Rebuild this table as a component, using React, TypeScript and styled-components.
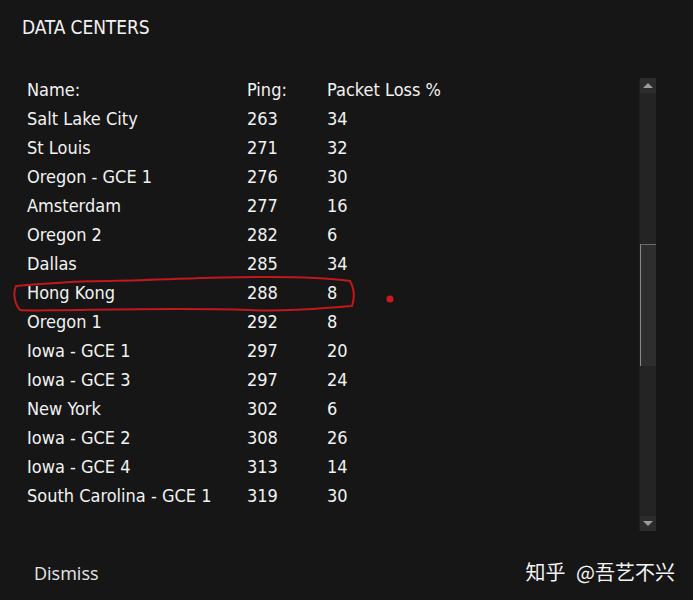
import React from 'react';
import styled, { createGlobalStyle } from 'styled-components';

interface DataCenter {
  name: string;
  ping: number;
  loss: number;
}

const dataCenters: DataCenter[] = [
  { name: 'Salt Lake City', ping: 263, loss: 34 },
  { name: 'St Louis', ping: 271, loss: 32 },
  { name: 'Oregon - GCE 1', ping: 276, loss: 30 },
  { name: 'Amsterdam', ping: 277, loss: 16 },
  { name: 'Oregon 2', ping: 282, loss: 6 },
  { name: 'Dallas', ping: 285, loss: 34 },
  { name: 'Hong Kong', ping: 288, loss: 8 },
  { name: 'Oregon 1', ping: 292, loss: 8 },
  { name: 'Iowa - GCE 1', ping: 297, loss: 20 },
  { name: 'Iowa - GCE 3', ping: 297, loss: 24 },
  { name: 'New York', ping: 302, loss: 6 },
  { name: 'Iowa - GCE 2', ping: 308, loss: 26 },
  { name: 'Iowa - GCE 4', ping: 313, loss: 14 },
  { name: 'South Carolina - GCE 1', ping: 319, loss: 30 },
];

const GlobalStyle = createGlobalStyle`
  html, body {
    margin: 0;
    padding: 0;
    background: #161616;
  }
`;

const Screen = styled.div`
  position: relative;
  width: 693px;
  height: 600px;
  background: #161616;
  color: #f2f2f2;
  font-family: 'DejaVu Sans Condensed', 'DejaVu Sans', sans-serif;
  display: flex;
  flex-direction: column;
  box-sizing: border-box;
  padding-top: 16px;
  overflow: hidden;
`;

const Title = styled.h1`
  margin: 0 0 0 22px;
  font-size: 19px;
  font-weight: normal;
  line-height: 22px;
  letter-spacing: -0.1px;
`;

const Panel = styled.div`
  display: flex;
  margin-top: 40px;
  height: 453px;
`;

const Table = styled.div`
  flex: 1;
  padding-left: 27px;
  margin-top: -3px;
`;

const Row = styled.div`
  display: grid;
  grid-template-columns: 220px 80px 1fr;
  height: 29px;
  align-items: center;
  font-size: 18px;
`;

const Cell = styled.span`
  white-space: nowrap;
`;

const Scrollbar = styled.div`
  width: 16px;
  margin-right: 37px;
  background: #1f1f1f;
  border-left: 1px solid #1c1c1c;
  display: flex;
  flex-direction: column;
`;

const ArrowButton = styled.div`
  height: 15px;
  background: #2c2c2c;
  display: flex;
  align-items: center;
  justify-content: center;
`;

const Arrow = styled.div<{ $up?: boolean }>`
  width: 0;
  height: 0;
  border-left: 5px solid transparent;
  border-right: 5px solid transparent;
  ${(p) =>
    p.$up ? 'border-bottom: 5px solid #9a9a9a;' : 'border-top: 5px solid #9a9a9a;'}
`;

const Track = styled.div`
  flex: 1;
  background: #242424;
  display: flex;
  flex-direction: column;
`;

const Thumb = styled.div`
  margin-top: 151px;
  height: 121px;
  background: #2e2e2e;
  border-left: 1px solid #8a8a8a;
  border-top: 1px solid #6a6a6a;
`;

const Footer = styled.div`
  display: flex;
  justify-content: space-between;
  align-items: center;
  margin-top: 30px;
  padding: 0 18px 0 34px;
`;

const Dismiss = styled.span`
  font-family: 'Open Sans', 'DejaVu Sans', sans-serif;
  font-size: 18px;
  color: #e6e6e6;
  margin-top: -2px;
`;

const Watermark = styled.span`
  font-family: 'Noto Sans CJK SC', 'Noto Sans', sans-serif;
  font-size: 20px;
  color: #f4f4f4;
  margin-top: -4px;
  word-spacing: 6px;
`;

const Annotation = styled.svg`
  position: absolute;
  left: 0;
  top: 0;
  pointer-events: none;
`;

const App: React.FC = () => {
  return (
    <>
      <GlobalStyle />
      <Screen>
        <Title>DATA CENTERS</Title>
        <Panel>
          <Table>
            <Row>
              <Cell>Name:</Cell>
              <Cell>Ping:</Cell>
              <Cell>Packet Loss %</Cell>
            </Row>
            {dataCenters.map((dc) => (
              <Row key={dc.name}>
                <Cell>{dc.name}</Cell>
                <Cell>{dc.ping}</Cell>
                <Cell>{dc.loss}</Cell>
              </Row>
            ))}
          </Table>
          <Scrollbar>
            <ArrowButton>
              <Arrow $up />
            </ArrowButton>
            <Track>
              <Thumb />
            </Track>
            <ArrowButton>
              <Arrow />
            </ArrowButton>
          </Scrollbar>
        </Panel>
        <Footer>
          <Dismiss>Dismiss</Dismiss>
          <Watermark>知乎 @吾艺不兴</Watermark>
        </Footer>
        <Annotation width={693} height={600}>
          <path
            d="M16 286 C40 284 70 281 110 281 C170 280 220 276 270 277 C310 277 335 279 350 281 C355 290 354 300 352 306 C320 308 290 312 250 310 C190 308 140 309 80 310 C50 310 30 311 20 310 C14 303 13 292 16 286 Z"
            fill="none"
            stroke="#c0181c"
            strokeWidth={2}
          />
          <circle cx={390} cy={299} r={3.5} fill="#d0181c" />
        </Annotation>
      </Screen>
    </>
  );
};

export default App;
